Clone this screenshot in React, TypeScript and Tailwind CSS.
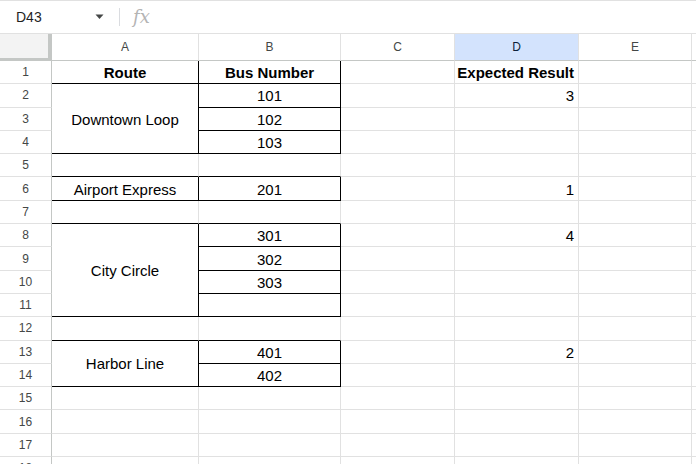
import React from 'react';

type Cell = {
  t?: string;
  bold?: boolean;
  align?: 'center' | 'right';
  span?: number;
  r?: boolean; // black right border
  b?: boolean; // black bottom border
} | null;

const SPAN: Record<number, string> = {
  1: '',
  2: 'row-span-2',
  3: 'row-span-3',
  4: 'row-span-4',
};

const e: Cell = {};
const box = (t: string, span = 1): Cell => ({ t, align: 'center', r: true, b: true, span });
const edge: Cell = { b: true };
const num = (t: string): Cell => ({ t, align: 'right' });

// columns A..E, null where a merged cell covers the slot
const ROWS: Cell[][] = [
  [
    { t: 'Route', bold: true, align: 'center', r: true, b: true },
    { t: 'Bus Number', bold: true, align: 'center', r: true, b: true },
    e,
    { t: 'Expected Result', bold: true, align: 'right' },
    e,
  ],
  [box('Downtown Loop', 3), box('101'), e, num('3'), e],
  [null, box('102'), e, e, e],
  [null, box('103'), e, e, e],
  [edge, edge, e, e, e],
  [box('Airport Express'), box('201'), e, num('1'), e],
  [edge, edge, e, e, e],
  [box('City Circle', 4), box('301'), e, num('4'), e],
  [null, box('302'), e, e, e],
  [null, box('303'), e, e, e],
  [null, box(''), e, e, e],
  [edge, edge, e, e, e],
  [box('Harbor Line', 2), box('401'), e, num('2'), e],
  [null, box('402'), e, e, e],
  [e, e, e, e, e],
  [e, e, e, e, e],
  [e, e, e, e, e],
  [e, e, e, e, e],
];

const COLS = ['A', 'B', 'C', 'D', 'E'];

function DataCell({ cell }: { cell: NonNullable<Cell> }) {
  const span = cell.span ?? 1;
  return (
    <div
      className={`flex items-center overflow-hidden whitespace-nowrap border-r border-b px-[4px] pt-px text-[15px] leading-[17px] text-black ${
        cell.r ? 'border-r-black' : 'border-r-[#e1e1e1]'
      } ${cell.b ? 'border-b-black' : 'border-b-[#e1e1e1]'} ${
        cell.align === 'center' ? 'justify-center' : cell.align === 'right' ? 'justify-end' : 'justify-start'
      } ${cell.bold ? 'font-bold' : ''} ${SPAN[span]}`}
    >
      {cell.t}
    </div>
  );
}

export default function App() {
  return (
    <div className="h-[464px] w-[696px] overflow-hidden bg-white font-['Liberation_Sans',Arial,sans-serif]">
      {/* Formula bar */}
      <div className="flex h-[34px] items-center border-t border-b border-[#e1e1e1]">
        <div className="flex w-[119px] items-center pl-[16px] pr-[15px]">
          <span className="text-[14px] text-[#1f1f1f]">D43</span>
          <svg className="ml-auto" width="9" height="6" viewBox="0 0 9 6">
            <path d="M0.5 0.5h8L4.5 5z" fill="#444746" />
          </svg>
        </div>
        <div className="h-[18px] w-px bg-[#dadce0]" />
        <span className="ml-[13px] font-['DejaVu_Serif',serif] text-[18px] italic leading-none text-[#b4b4b4]">
          fx
        </span>
      </div>

      {/* Sheet grid */}
      <div className="grid grid-cols-[52px_147px_142px_114px_124px_113px_1fr] grid-rows-[27px] auto-rows-[23.3px]">
        <div className="border-r-[4px] border-b-[3px] border-[#c4c7c5] bg-[#f3f3f3]" />
        {COLS.map((c) => (
          <div
            key={c}
            className={`flex items-center justify-center border-r border-b border-r-[#e1e1e1] border-b-[#c4c7c5] text-[12px] ${
              c === 'D' ? 'bg-[#d3e3fd] text-[#0b1f3a]' : 'bg-white text-[#444746]'
            }`}
          >
            {c}
          </div>
        ))}
        <div className="border-b border-[#c4c7c5] bg-white" />

        {ROWS.map((row, i) => (
          <React.Fragment key={i}>
            <div className="flex items-center justify-center border-r border-b border-r-[#c4c7c5] border-b-[#e1e1e1] text-[12px] text-[#444746]">
              {i + 1}
            </div>
            {row.map((cell, j) => (cell ? <DataCell key={j} cell={cell} /> : null))}
            <div className="border-b border-[#e1e1e1]" />
          </React.Fragment>
        ))}
      </div>
    </div>
  );
}
